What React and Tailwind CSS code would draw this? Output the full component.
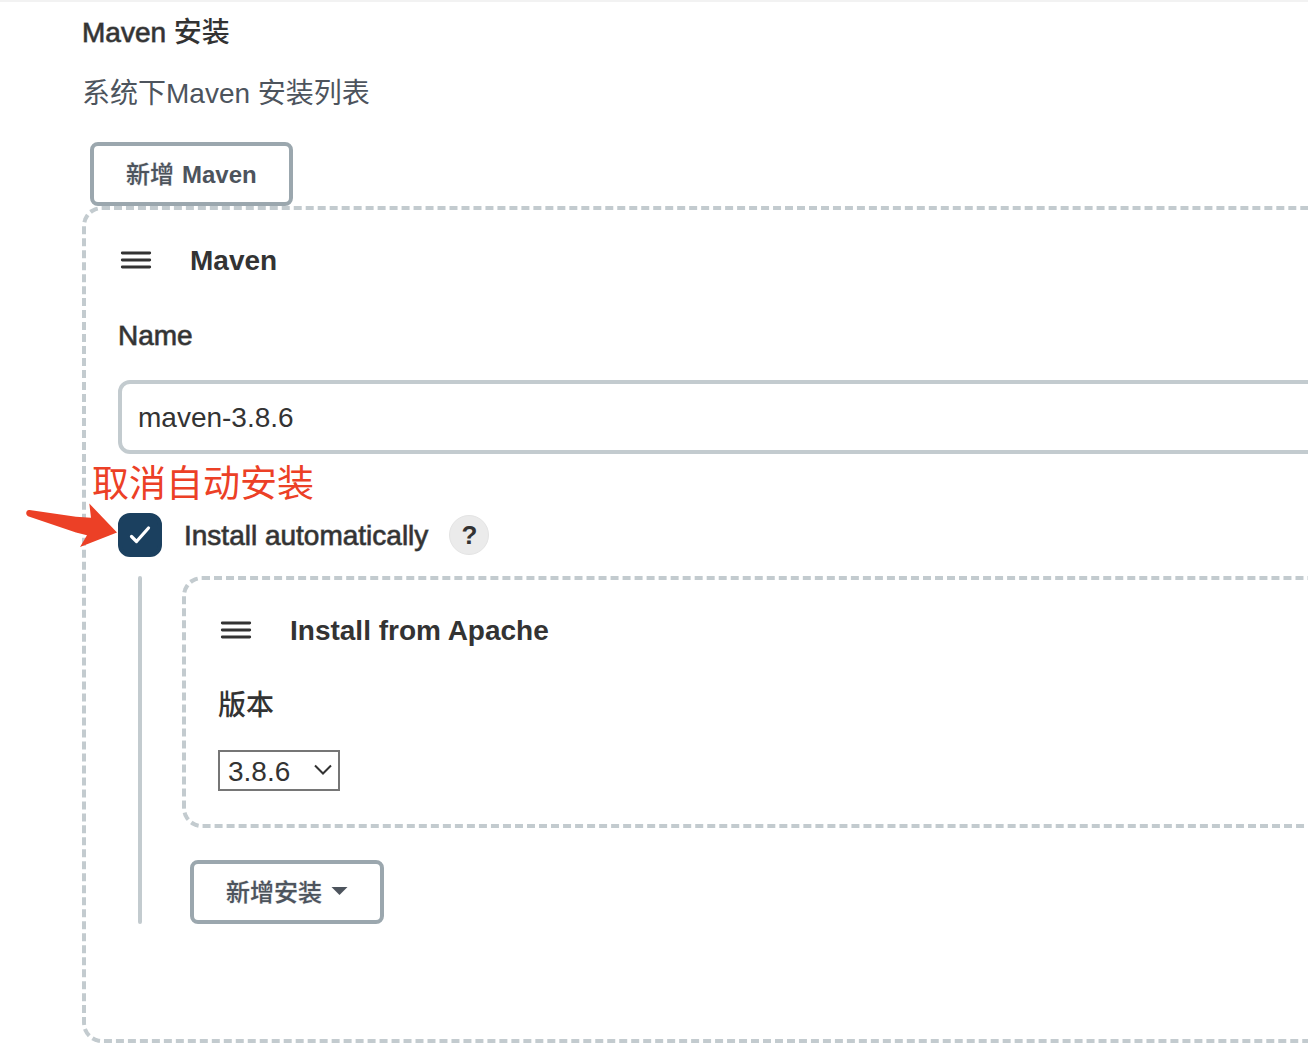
import React, { useState } from "react";

const DragHandle = () => (
  <button type="button" aria-label="Reorder" className="w-9 h-10 flex items-center justify-center text-[#333333] cursor-move">
    <svg width="32" height="18" viewBox="0 0 32 18" fill="none" stroke="currentColor" strokeWidth="2.9" strokeLinecap="round">
      <path d="M2.3 2H29.7M2.3 9H29.7M2.3 16H29.7" />
    </svg>
  </button>
);

const ChunkHeader = ({ children }) => (
  <div className="flex items-center gap-9">
    <DragHandle />
    <h3 className="pt-0.5 text-[28px] leading-10 font-bold">{children}</h3>
  </div>
);

// Dashed, reorderable block. Runs past the right edge of its parent.
const Chunk = ({ className, children }) => (
  <div className={`border-4 border-dashed border-[#c3cbcf] rounded-[20px] pl-8 pt-[29px] -mr-16 ${className}`}>
    {children}
  </div>
);

const OutlineButton = ({ children }) => (
  <button
    type="button"
    className="h-16 px-8 pt-0.5 flex items-center gap-2 bg-white border-4 border-[#9ba7ae] rounded-lg text-2xl font-bold text-[#4d545d]"
  >
    {children}
  </button>
);

// Red callout pointing at the auto install checkbox
const Annotation = () => (
  <div className="absolute left-[-92px] top-[-50px] pointer-events-none text-[#ec4026]">
    <p className="pl-[66px] text-[37px] leading-[44px] whitespace-nowrap">取消自动安装</p>
    <svg width="94" height="46" viewBox="0 0 94 46" className="-mt-1" fill="currentColor">
      <path d="M3.5 7L50 13.8L65 14.7L63.3 0.5L91 29.5L54 44L61 32.3L50 29.5L2 13.2C-1 11.5 0 6.5 3.5 7Z" />
    </svg>
  </div>
);

const InstallerChunk = () => (
  <Chunk className="pb-[33px]">
    <ChunkHeader>Install from Apache</ChunkHeader>
    <label htmlFor="version" className="block w-fit mt-[33px] pt-0.5 text-[28px] leading-10 font-medium">
      版本
    </label>
    <div className="relative w-fit mt-6">
      <select
        id="version"
        defaultValue="3.8.6"
        className="block w-[122px] h-[41px] appearance-none bg-white border-2 border-[#767676] pl-2 pt-0.5 text-[28px] leading-9"
      >
        <option>3.8.6</option>
        <option>3.8.5</option>
        <option>3.8.4</option>
      </select>
      <svg width="18" height="12" viewBox="0 0 18 12" className="absolute right-2 top-3.5 pointer-events-none" fill="none" stroke="#333333" strokeWidth="2">
        <path d="M1 1.5L9 9.5L17 1.5" />
      </svg>
    </div>
  </Chunk>
);

const App = () => {
  const [auto, setAuto] = useState(true);
  const [name, setName] = useState("maven-3.8.6");

  return (
    <main className="overflow-hidden border-t-2 border-[#f2f2f2] bg-white pl-[82px] pt-[11px] pb-4 text-[#333333] font-['Liberation_Sans','Noto_Sans_CJK_SC',sans-serif]">
      <h2 className="text-[28px] leading-10 font-medium">
        <span className="[-webkit-text-stroke:1px_#333333b0]">Maven</span> 安装
      </h2>
      <p className="mt-[21px] text-[28px] leading-10 text-[#4d545d]">系统下Maven 安装列表</p>

      <div className="mt-7 pl-2 flex">
        <OutlineButton>
          <span className="font-medium [-webkit-text-stroke:1px_#4d545d40]">新增</span>
          Maven
        </OutlineButton>
      </div>

      <Chunk className="pb-[115px]">
        <ChunkHeader>Maven</ChunkHeader>

        <label htmlFor="name" className="block w-fit mt-[33px] pt-0.5 text-[28px] leading-10 [-webkit-text-stroke:1px_#333333b0]">
          Name
        </label>
        <input
          id="name"
          type="text"
          value={name}
          onChange={(e) => setName(e.target.value)}
          className="block w-full h-[74px] mt-6 px-4 pt-0.5 border-4 border-[#c3cbcf] rounded-xl text-[28px]"
        />

        {/* AUTO INSTALL */}
        <div className="relative mt-[59px] h-11 flex items-center">
          <Annotation />
          <span className="relative w-11 h-11">
            <input
              id="auto"
              type="checkbox"
              checked={auto}
              onChange={(e) => setAuto(e.target.checked)}
              className="block w-11 h-11 appearance-none rounded-xl border-4 border-[#c3cbcf] checked:border-[#1b405f] checked:bg-[#1b405f]"
            />
            {auto && (
              <svg width="44" height="44" viewBox="0 0 44 44" className="absolute inset-0 pointer-events-none" fill="none" stroke="white" strokeWidth="3.2" strokeLinecap="round" strokeLinejoin="round">
                <path d="M13.5 23.5L18.5 28.5L30.5 15" />
              </svg>
            )}
          </span>
          <label htmlFor="auto" className="ml-[22px] pt-0.5 text-[28px] leading-10 [-webkit-text-stroke:1px_#333333b0]">
            Install automatically
          </label>
          <button type="button" aria-label="Help" className="ml-[21px] w-10 h-10 rounded-full bg-[#ebebeb] border border-[#e4e4e4] text-[26px] font-bold">
            ?
          </button>
        </div>

        {/* INSTALLERS */}
        <div className="mt-[19px] ml-5 flex gap-10">
          <div className="w-1 shrink-0 rounded-full bg-[#c3cbcf]" />
          <div className="flex-1">
            <InstallerChunk />
            <div className="mt-8 pl-2 flex">
              <OutlineButton>
                <span className="font-medium [-webkit-text-stroke:1px_#4d545d40]">新增安装</span>
                <svg width="18" height="12" viewBox="0 0 18 12" fill="currentColor">
                  <path d="M1.5 0H17.5L9.5 8Z" />
                </svg>
              </OutlineButton>
            </div>
          </div>
        </div>
      </Chunk>
    </main>
  );
};

export default App;
